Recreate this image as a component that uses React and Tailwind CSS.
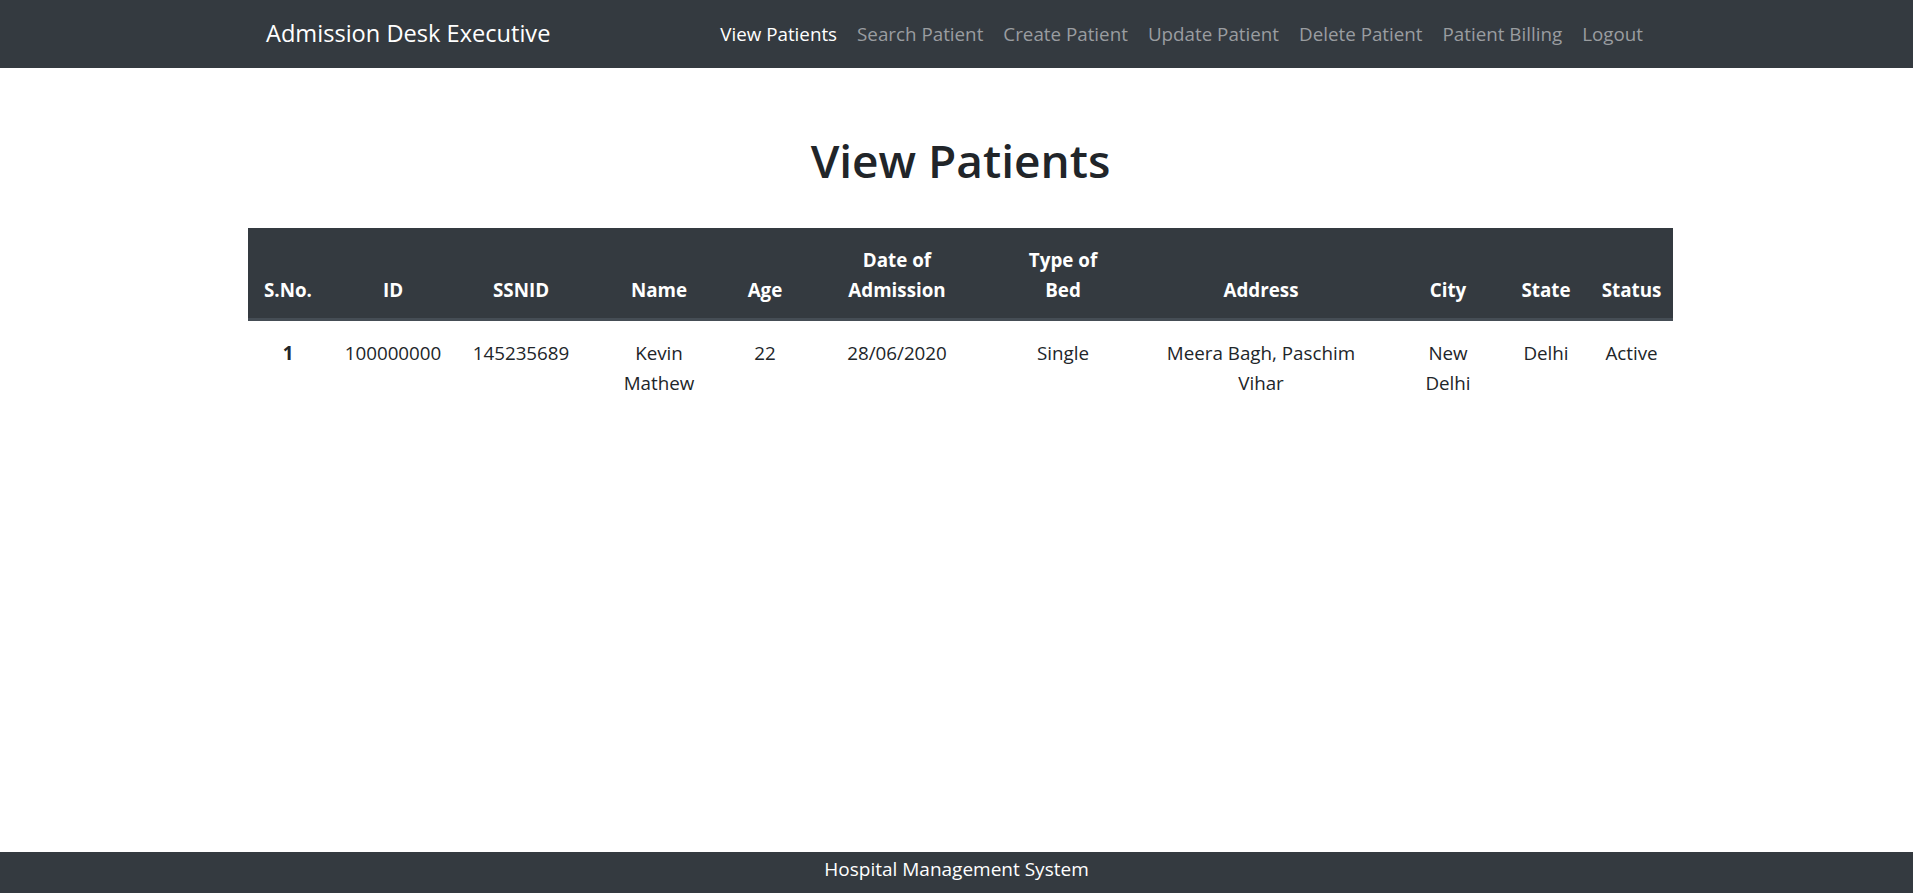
import React from "react";

const links = [
  "View Patients",
  "Search Patient",
  "Create Patient",
  "Update Patient",
  "Delete Patient",
  "Patient Billing",
  "Logout",
];

const patients = [
  {
    id: "100000000",
    ssnid: "145235689",
    name: ["Kevin", "Mathew"],
    age: "22",
    doa: "28/06/2020",
    bed: "Single",
    address: ["Meera Bagh, Paschim", "Vihar"],
    city: ["New", "Delhi"],
    state: "Delhi",
    status: "Active",
  },
];

function Lines({ parts }) {
  return parts.map((p, i) => (
    <span key={i} className="block">
      {p}
    </span>
  ));
}

export default function App() {
  return (
    <div
      className="min-h-screen flex flex-col bg-white text-[#212529]"
      style={{ fontFamily: '"Open Sans", "Noto Sans", sans-serif' }}
    >
      {/* Navbar */}
      <nav className="bg-[#343a40] h-[68px]">
        <div className="w-[1425px] mx-auto h-full flex items-center pl-[22px] pr-[16px]">
          <span className="text-white text-[23.6px] leading-none">Admission Desk Executive</span>
          <ul className="ml-auto flex items-center">
            {links.map((l, i) => (
              <li key={l}>
                <a
                  href="#"
                  className={
                    "block px-[10px] text-[18.8px] leading-none " +
                    (i === 0 ? "text-white" : "text-[#9a9da0]")
                  }
                >
                  {l}
                </a>
              </li>
            ))}
          </ul>
        </div>
      </nav>

      {/* Content */}
      <main className="w-[1433px] mx-auto pl-[8px]">
        <h1 className="text-center text-[46px] font-semibold leading-[60px] mt-[62px] mb-[38px]">
          View Patients
        </h1>

        <table className="w-[1425px] table-fixed border-collapse text-[18.8px] leading-[30px] text-center">
          <colgroup>
            <col className="w-[80px]" />
            <col className="w-[130px]" />
            <col className="w-[126px]" />
            <col className="w-[150px]" />
            <col className="w-[62px]" />
            <col className="w-[202px]" />
            <col className="w-[130px]" />
            <col className="w-[266px]" />
            <col className="w-[108px]" />
            <col className="w-[88px]" />
            <col className="w-[83px]" />
          </colgroup>
          <thead className="bg-[#343a40] text-white">
            <tr>
              {[
                ["S.No."],
                ["ID"],
                ["SSNID"],
                ["Name"],
                ["Age"],
                ["Date of", "Admission"],
                ["Type of", "Bed"],
                ["Address"],
                ["City"],
                ["State"],
                ["Status"],
              ].map((h) => (
                <th
                  key={h.join(" ")}
                  className="font-bold align-bottom pt-[17px] pb-[13px] px-0 border-b-[3px] border-[#454d55] whitespace-nowrap"
                >
                  <Lines parts={h} />
                </th>
              ))}
            </tr>
          </thead>
          <tbody>
            {patients.map((p, i) => (
              <tr key={p.id} className="align-top">
                <th className="font-bold pt-[17px] pb-[13px]">{i + 1}</th>
                <td className="pt-[17px] pb-[13px]">{p.id}</td>
                <td className="pt-[17px] pb-[13px]">{p.ssnid}</td>
                <td className="pt-[17px] pb-[13px]">
                  <Lines parts={p.name} />
                </td>
                <td className="pt-[17px] pb-[13px]">{p.age}</td>
                <td className="pt-[17px] pb-[13px]">{p.doa}</td>
                <td className="pt-[17px] pb-[13px]">{p.bed}</td>
                <td className="pt-[17px] pb-[13px]">
                  <Lines parts={p.address} />
                </td>
                <td className="pt-[17px] pb-[13px]">
                  <Lines parts={p.city} />
                </td>
                <td className="pt-[17px] pb-[13px]">{p.state}</td>
                <td className="pt-[17px] pb-[13px]">{p.status}</td>
              </tr>
            ))}
          </tbody>
        </table>
      </main>

      {/* Footer */}
      <footer className="mt-auto bg-[#343a40] h-[41px] flex items-center justify-center pb-[6px]">
        <span className="text-white text-[19px] leading-none">Hospital Management System</span>
      </footer>
    </div>
  );
}
